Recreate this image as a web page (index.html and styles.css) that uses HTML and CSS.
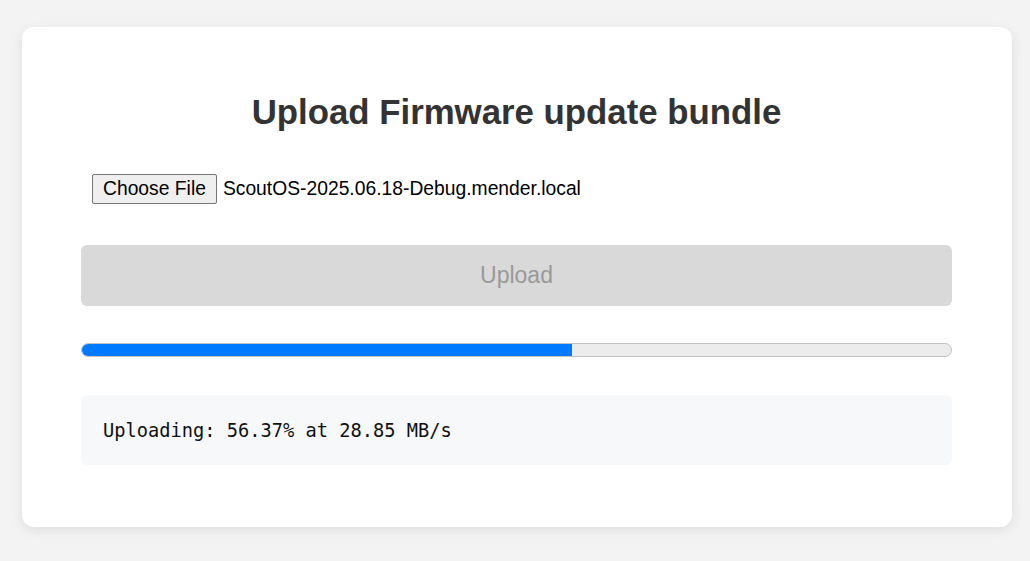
FILE: index.html
```html
<!doctype html>
<html lang="en">
  <head>
    <meta charset="utf-8">
    <meta name="viewport" content="width=device-width, initial-scale=1">
    <title>Upload Firmware</title>
    <link rel="stylesheet" href="styles.css">
  </head>
  <body>
    <div class="card">
      <h1 class="title">Upload Firmware update bundle</h1>
      <div class="file-row">
        <button class="file-btn" type="button">Choose File</button>
        <span class="file-name">ScoutOS-2025.06.18-Debug.mender.local</span>
      </div>
      <button class="upload-btn" type="button" disabled>Upload</button>
      <div class="progress">
        <div class="progress-fill" style="width: 56.37%"></div>
      </div>
      <div class="status">Uploading: 56.37% at 28.85 MB/s</div>
    </div>
  </body>
</html>
```

FILE: styles.css
```css
html, body {
  margin: 0;
  padding: 0;
}
body {
  background: #f3f3f3;
  font-family: "Liberation Sans", Arial, sans-serif;
  color: #333;
  padding: 27px 18px 34px 22px;
}
.card {
  background: #fff;
  border-radius: 12px;
  box-shadow: 0 3px 12px rgba(0, 0, 0, 0.09);
  padding: 65px 60px 62px 59px;
  display: flex;
  flex-direction: column;
}
.title {
  margin: 0;
  font-size: 34.8px;
  font-weight: bold;
  text-align: center;
  line-height: 40px;
}
.file-row {
  display: flex;
  align-items: center;
  padding-left: 11px;
  margin-top: 42px;
  font-size: 19.3px;
  color: #000;
}
.file-btn {
  font-family: inherit;
  font-size: 19.3px;
  color: #000;
  background: #efefef;
  border: 1px solid #767676;
  border-radius: 2px;
  padding: 3px 10px;
  margin-right: 6px;
  line-height: 22px;
}
.upload-btn {
  margin-top: 41px;
  height: 61px;
  border: none;
  border-radius: 6px;
  background: #d9d9d9;
  color: #999;
  font-family: inherit;
  font-size: 23px;
}
.progress {
  margin-top: 37px;
  height: 12px;
  border: 1px solid #c2c2c2;
  border-radius: 7px;
  background: #ececec;
  overflow: hidden;
}
.progress-fill {
  height: 100%;
  background: #007bff;
}
.status {
  margin-top: 38px;
  background: #f6f8fa;
  border-radius: 6px;
  padding: 25px 22px 23px;
  font-family: "DejaVu Sans Mono", monospace;
  font-size: 18.7px;
  line-height: 22px;
  color: #111;
}
```
